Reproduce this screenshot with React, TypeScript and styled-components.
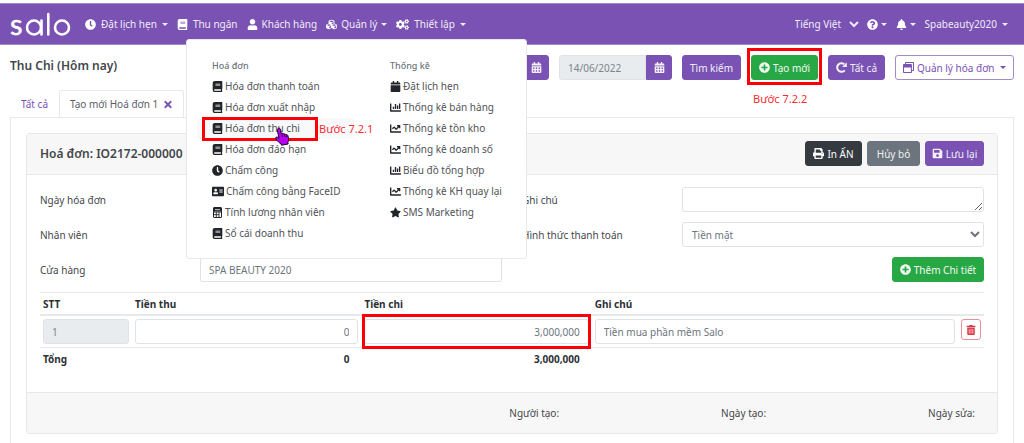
import React from "react";
import styled, { createGlobalStyle, css } from "styled-components";
import {
  FaAddressCard,
  FaBell,
  FaBook,
  FaCalendar,
  FaCalendarAlt,
  FaChartBar,
  FaChartLine,
  FaClock,
  FaCogs,
  FaCubes,
  FaPlusCircle,
  FaPrint,
  FaQuestionCircle,
  FaRegWindowRestore,
  FaSave,
  FaStar,
  FaTimes,
  FaTrashAlt,
  FaUser,
} from "react-icons/fa";

const purple = "#7952b3";
const green = "#28a745";
const line = "#e6e8ea";
const font = '"Noto Sans", "Open Sans", sans-serif';

const GlobalStyle = createGlobalStyle`
  *, *::before, *::after { box-sizing: border-box; }
  body { margin: 0; background: #fff; color: #43474b; font: 10px/16px ${font}; }
  button, input, select, textarea { font: inherit; }
  h1, h2, h3, ul { margin: 0; padding: 0; }
  ul { list-style: none; }
`;

const Page = styled.div`
  display: flex;
  flex-direction: column;
  min-height: 100vh;
`;

const Navbar = styled.header`
  position: relative;
  display: flex;
  align-items: center;
  justify-content: space-between;
  height: 42px;
  margin-top: 3px;
  padding: 0 16px 0 10px;
  background: ${purple};
  border-top: 1px solid #a38bc4;
  border-bottom: 1px solid #a38bc4;
  color: #fff;
`;

const NavGroup = styled.nav`
  display: flex;
  align-items: center;
  gap: 9px;
`;

const LogoLink = styled.a`
  display: flex;
  margin-right: 5px;
`;

const NavButton = styled.button<{ $gap?: number }>`
  display: flex;
  align-items: center;
  gap: ${(p) => p.$gap ?? 5}px;
  padding: 0;
  border: 0;
  background: none;
  color: #f1ecf7;
  white-space: nowrap;
  cursor: pointer;
  svg { width: 11px; height: 11px; color: #fff; }
`;

const WideNavButton = styled(NavButton)`
  svg { width: 13px; }
`;

const Caret = styled.span`
  border: 3px solid transparent;
  border-top-color: currentColor;
  border-bottom: 0;
`;

const LanguageSelect = styled.select`
  width: 71px;
  margin-right: -4px;
  padding: 0;
  border: 0;
  background: transparent;
  color: #f1ecf7;
`;

const Menu = styled.div`
  position: absolute;
  z-index: 2;
  top: 35px;
  left: 186px;
  display: grid;
  grid-template-columns: 157px 1fr;
  gap: 21px;
  width: 341px;
  height: 220px;
  padding: 16px 10px 0;
  background: #fff;
  border: 1px solid ${line};
  border-radius: 3px;
`;

const MenuTitle = styled.h3`
  padding: 0 15px;
  color: #6c757d;
  font-size: 9px;
  font-weight: 500;
  line-height: 20px;
`;

const MenuItem = styled.li<{ $active?: boolean }>`
  position: relative;
  background: ${(p) => (p.$active ? "#f8f9fa" : "none")};
`;

const MenuLink = styled.a<{ $wide?: boolean }>`
  display: flex;
  align-items: center;
  gap: 2px;
  padding: 0 15px;
  color: #4f5357;
  line-height: 21px;
  text-decoration: none;
  white-space: nowrap;
  svg { flex: none; width: ${(p) => (p.$wide ? 12 : 11)}px; height: 11px; color: #212529; }
`;

const Highlight = styled.span<{ $inset: string }>`
  position: absolute;
  z-index: 3;
  inset: ${(p) => p.$inset};
  border: 3px solid #fb0007;
  pointer-events: none;
`;

const Note = styled.span<{ $top: number; $left: number }>`
  position: absolute;
  z-index: 3;
  top: ${(p) => p.$top}px;
  left: ${(p) => p.$left}px;
  color: #fb2b30;
  font-size: 11px;
  line-height: 16px;
  white-space: nowrap;
`;

const Pointer = styled.svg`
  position: absolute;
  z-index: 4;
  top: 9px;
  left: 77px;
`;

const Toolbar = styled.div`
  display: flex;
  align-items: center;
  justify-content: space-between;
  padding: 10px;
`;

const PageTitle = styled.h1`
  padding-bottom: 3px;
  font-size: 12px;
  font-weight: 600;
  line-height: 20px;
`;

const Actions = styled.div`
  display: flex;
  gap: 10px;
`;

type Tone = "purple" | "green" | "dark" | "grey" | "outline";
const tones: Record<Tone, ReturnType<typeof css>> = {
  purple: css`background: ${purple}; border-color: ${purple}; color: #f4f0f9;`,
  green: css`background: ${green}; border-color: ${green}; color: #f1faf3;`,
  dark: css`background: #343a40; border-color: #343a40; color: #fff;`,
  grey: css`background: #6c757d; border-color: #6c757d; color: #f1f2f3;`,
  outline: css`background: #fff; border-color: #a38bc4; color: ${purple};`,
};

const Button = styled.button<{ $tone: Tone; $width: number }>`
  display: inline-flex;
  align-items: center;
  justify-content: center;
  gap: 3px;
  min-width: ${(p) => p.$width}px;
  height: 25px;
  padding: 0 4px;
  border: 1px solid;
  border-radius: 3px;
  white-space: nowrap;
  cursor: pointer;
  ${(p) => tones[p.$tone]}
  svg { flex: none; width: 11px; height: 11px; }
`;

const Anchor = styled.div`
  position: relative;
  display: flex;
`;

const DateGroup = styled.div`
  display: flex;
  button { border-radius: 0 3px 3px 0; }
`;

const control = css`
  width: 100%;
  height: 25px;
  padding: 0 8px;
  background: #fff;
  border: 1px solid #dfe3e7;
  border-radius: 3px;
  color: #6c757d;
`;

const Input = styled.input<{ $right?: boolean }>`
  ${control}
  display: block;
  text-align: ${(p) => (p.$right ? "right" : "left")};
  &:disabled { background: #e9ecef; color: #7c848b; }
`;

const DateInput = styled(Input)`
  width: 87px;
  border-radius: 3px 0 0 3px;
`;

const TextArea = styled.textarea`
  ${control}
  display: block;
  resize: vertical;
`;

const Select = styled.select`
  ${control}
  padding: 0 5px;
`;

const Tabs = styled.div`
  display: flex;
  padding: 0 10px;
`;

const Tab = styled.button<{ $active?: boolean }>`
  display: flex;
  align-items: center;
  gap: 5px;
  height: 28px;
  margin-bottom: -1px;
  padding: 0 10px;
  background: ${(p) => (p.$active ? "#fff" : "transparent")};
  border: 1px solid ${(p) => (p.$active ? line : "transparent")};
  border-bottom-color: ${(p) => (p.$active ? "#fff" : "transparent")};
  border-radius: 3px 3px 0 0;
  color: ${(p) => (p.$active ? "#5b6167" : purple)};
  cursor: pointer;
  svg { width: 10px; height: 11px; color: ${purple}; }
`;

const Pane = styled.main`
  flex: 1;
  margin: 0 10px;
  padding: 15px 15px 0;
  border: 1px solid ${line};
  border-bottom: 0;
`;

const Card = styled.section`
  border: 1px solid ${line};
  border-radius: 3px;
`;

const CardHeader = styled.div`
  display: flex;
  align-items: center;
  justify-content: space-between;
  padding: 7px 13px 8px;
  background: #f7f7f7;
  border-bottom: 1px solid ${line};
`;

const CardTitle = styled.h2`
  font-size: 12px;
  font-weight: 600;
  line-height: 20px;
`;

const CardActions = styled.div`
  display: flex;
  gap: 5px;
`;

const CardBody = styled.div`
  padding: 12px 13px 22px;
`;

const FormGrid = styled.div`
  display: grid;
  grid-template-columns: 1fr 1fr;
  gap: 10px 20px;
`;

const Field = styled.div`
  display: grid;
  grid-template-columns: 160px 1fr;
  align-items: center;
`;

const FieldAction = styled.div`
  display: flex;
  justify-content: flex-end;
`;

const Table = styled.table`
  width: 100%;
  margin-top: 10px;
  border-collapse: separate;
  border-spacing: 0;
  table-layout: fixed;
  th, td { padding: 3px; text-align: left; vertical-align: top; }
  th { color: #2c3034; font-weight: 700; line-height: 16px; }
  thead th { padding-bottom: 2px; border-top: 1px solid ${line}; border-bottom: 2px solid ${line}; }
  tfoot th { border-top: 1px solid ${line}; }
  tbody td { position: relative; }
`;

const Total = styled.th`
  && { padding-right: 12px; text-align: right; }
`;

const DeleteButton = styled.button`
  display: flex;
  align-items: center;
  justify-content: center;
  width: 20px;
  height: 21px;
  padding: 0;
  background: #fff;
  border: 1px solid #ea8e97;
  border-radius: 3px;
  color: #dc3545;
  cursor: pointer;
  svg { width: 10px; height: 10px; }
`;

const CardFooter = styled.div`
  display: flex;
  justify-content: flex-end;
  gap: 162px;
  padding: 12px 22px;
  background: #f7f7f7;
  border-top: 1px solid ${line};
`;

function Calculator() {
  return (
    <svg viewBox="0 0 9 11" fill="none" stroke="currentColor" aria-hidden="true">
      <rect x=".5" y=".5" width="8" height="10" rx=".5" />
      <rect x="1" y="1" width="7" height="3.500" fill="currentColor" stroke="none" />
      <path d="M2 2.700h5" stroke="#fff" strokeWidth=".8" />
      <path d="M.5 5h8M.5 7.700h5.500M3.300 5v5.500M6 5v5.500" strokeWidth=".9" />
    </svg>
  );
}

function Reload() {
  return (
    <svg viewBox="0 0 11 11" fill="none" aria-hidden="true">
      <path d="M8.800 8.300A4.300 4.300 0 1 1 8.300 2.300" stroke="currentColor" strokeWidth="2" />
      <path d="M10.800.3v4.700H6.100z" fill="currentColor" />
    </svg>
  );
}

const documents = [
  { icon: <FaBook />, label: "Hóa đơn thanh toán" },
  { icon: <FaBook />, label: "Hóa đơn xuất nhập" },
  { icon: <FaBook />, label: "Hóa đơn thu chi", active: true },
  { icon: <FaBook />, label: "Hóa đơn đáo hạn" },
  { icon: <FaClock />, label: "Chấm công" },
  { icon: <FaAddressCard />, label: "Chấm công bằng FaceID", wide: true },
  { icon: <Calculator />, label: "Tính lương nhân viên" },
  { icon: <FaBook />, label: "Sổ cái doanh thu" },
];

const reports = [
  { icon: <FaCalendar />, label: "Đặt lịch hẹn" },
  { icon: <FaChartBar />, label: "Thống kê bán hàng" },
  { icon: <FaChartLine />, label: "Thống kê tồn kho" },
  { icon: <FaChartLine />, label: "Thống kê doanh số" },
  { icon: <FaChartBar />, label: "Biểu đồ tổng hợp" },
  { icon: <FaChartLine />, label: "Thống kê KH quay lại" },
  { icon: <FaStar />, label: "SMS Marketing" },
];

function Logo() {
  return (
    <svg width="61" height="40" viewBox="0 -6 61 40" fill="none" stroke="#fff" strokeWidth="2.6" strokeLinecap="round" aria-hidden="true">
      <text x="0" y="25" fill="#fff" strokeWidth=".5" fontFamily="Lato, sans-serif" fontSize="29">s</text>
      <circle cx="24" cy="17.5" r="7" />
      <line x1="31.5" y1="10.5" x2="31.5" y2="24.500" />
      <line x1="38.3" y1="4" x2="38.3" y2="24.500" />
      <circle cx="52" cy="17.5" r="7" />
    </svg>
  );
}

function HandPointer() {
  return (
    <Pointer width="17" height="19" viewBox="0 0 17 19" aria-hidden="true">
      <path
        d="M4 1.5c1-.7 2.3-.2 2.5 1l.7 4 .9-.2c.8-.2 1.500.1 1.800.7.8-.3 1.600 0 2 .6.9-.2 1.700.2 2 1.100l.7 3c.3 1.600-.2 2.700-.7 3.600l.2 1.700-6.600 1.200-.6-1.500c-1.700-.8-3.300-2.500-5-4.700-.9-1.200.6-2.500 1.800-1.700l1.300 1L3.300 3c-.1-.6.200-1.200.7-1.500z"
        fill="#b400ee"
        stroke="#1c0426"
        strokeWidth="1"
      />
      <path d="M8 7.500l.4 2.500M10.500 7.500l.4 2.300M12.800 8.500l.2 1.500" stroke="#1c0426" strokeWidth="1" />
    </Pointer>
  );
}

export default function App() {
  return (
    <Page>
      <GlobalStyle />
      <Navbar>
        <NavGroup aria-label="Chính">
          <LogoLink href="#" aria-label="salo"><Logo /></LogoLink>
          <NavButton><FaClock />Đặt lịch hẹn<Caret /></NavButton>
          <NavButton><FaBook />Thu ngân</NavButton>
          <NavButton $gap={4}><FaUser />Khách hàng</NavButton>
          <NavButton $gap={4}><FaCubes />Quản lý<Caret /></NavButton>
          <WideNavButton><FaCogs />Thiết lập<Caret /></WideNavButton>
        </NavGroup>
        <NavGroup aria-label="Tài khoản">
          <LanguageSelect aria-label="Ngôn ngữ" defaultValue="vi">
            <option value="vi">Tiếng Việt</option>
          </LanguageSelect>
          <NavButton $gap={3} aria-label="Trợ giúp"><FaQuestionCircle /><Caret /></NavButton>
          <NavButton $gap={3} aria-label="Thông báo"><FaBell /><Caret /></NavButton>
          <NavButton>Spabeauty2020<Caret /></NavButton>
        </NavGroup>
        <Menu>
          <div>
            <MenuTitle>Hoá đơn</MenuTitle>
            <ul>
              {documents.map((item) => (
                <MenuItem key={item.label} $active={item.active}>
                  <MenuLink href="#" $wide={item.wide}>{item.icon}{item.label}</MenuLink>
                  {item.active && (
                    <>
                      <Highlight $inset="-1px 36px -2px 5px" />
                      <Note $top={3} $left={122}>Bước 7.2.1</Note>
                      <HandPointer />
                    </>
                  )}
                </MenuItem>
              ))}
            </ul>
          </div>
          <div>
            <MenuTitle>Thống kê</MenuTitle>
            <ul>
              {reports.map((item) => (
                <MenuItem key={item.label}>
                  <MenuLink href="#">{item.icon}{item.label}</MenuLink>
                </MenuItem>
              ))}
            </ul>
          </div>
        </Menu>
      </Navbar>

      <Toolbar>
        <PageTitle>Thu Chi (Hôm nay)</PageTitle>
        <Actions>
          <DateGroup>
            <DateInput aria-label="Từ ngày" defaultValue="14/06/2022" disabled />
            <Button $tone="purple" $width={26} aria-label="Chọn từ ngày"><FaCalendarAlt /></Button>
          </DateGroup>
          <DateGroup>
            <DateInput aria-label="Đến ngày" defaultValue="14/06/2022" disabled />
            <Button $tone="purple" $width={26} aria-label="Chọn đến ngày"><FaCalendarAlt /></Button>
          </DateGroup>
          <Button $tone="purple" $width={59}>Tìm kiếm</Button>
          <Anchor>
            <Button $tone="green" $width={67}><FaPlusCircle />Tạo mới</Button>
            <Highlight $inset="-7px -4px -5px -4px" />
            <Note $top={36} $left={2}>Bước 7.2.2</Note>
          </Anchor>
          <Button $tone="purple" $width={57}><Reload />Tất cả</Button>
          <Button $tone="outline" $width={119}><FaRegWindowRestore />Quản lý hóa đơn&nbsp;<Caret /></Button>
        </Actions>
      </Toolbar>

      <Tabs>
        <Tab>Tất cả</Tab>
        <Tab $active>Tạo mới Hoá đơn 1<FaTimes /></Tab>
      </Tabs>

      <Pane>
        <Card>
          <CardHeader>
            <CardTitle>Hoá đơn: IO2172-000000</CardTitle>
            <CardActions>
              <Button $tone="dark" $width={57}><FaPrint />In ẤN</Button>
              <Button $tone="grey" $width={53}>Hủy bỏ</Button>
              <Button $tone="purple" $width={59}><FaSave />Lưu lại</Button>
            </CardActions>
          </CardHeader>
          <CardBody>
            <FormGrid>
              <Field>
                <label htmlFor="date">Ngày hóa đơn</label>
                <Input id="date" defaultValue="14/06/2022" />
              </Field>
              <Field>
                <label htmlFor="note">Ghi chú</label>
                <TextArea id="note" />
              </Field>
              <Field>
                <label htmlFor="staff">Nhân viên</label>
                <Input id="staff" />
              </Field>
              <Field>
                <label htmlFor="payment">Hình thức thanh toán</label>
                <Select id="payment" defaultValue="cash">
                  <option value="cash">Tiền mặt</option>
                </Select>
              </Field>
              <Field>
                <label htmlFor="store">Cửa hàng</label>
                <Input id="store" defaultValue="SPA BEAUTY 2020" />
              </Field>
              <FieldAction>
                <Button $tone="green" $width={92}><FaPlusCircle />Thêm Chi tiết</Button>
              </FieldAction>
            </FormGrid>
            <Table>
              <colgroup>
                <col style={{ width: 92 }} />
                <col style={{ width: "24.3%" }} />
                <col style={{ width: "24.4%" }} />
                <col />
                <col style={{ width: 26 }} />
              </colgroup>
              <thead>
                <tr>
                  <th>STT</th>
                  <th>Tiền thu</th>
                  <th>Tiền chi</th>
                  <th>Ghi chú</th>
                  <th />
                </tr>
              </thead>
              <tbody>
                <tr>
                  <td><Input aria-label="STT" defaultValue="1" disabled /></td>
                  <td><Input aria-label="Tiền thu" defaultValue="0" $right /></td>
                  <td>
                    <Input aria-label="Tiền chi" defaultValue="3,000,000" $right />
                    <Highlight $inset="-2px 1px -2px 1px" />
                  </td>
                  <td><Input aria-label="Ghi chú" defaultValue="Tiền mua phần mềm Salo" /></td>
                  <td><DeleteButton aria-label="Xóa"><FaTrashAlt /></DeleteButton></td>
                </tr>
              </tbody>
              <tfoot>
                <tr>
                  <th>Tổng</th>
                  <Total>0</Total>
                  <Total>3,000,000</Total>
                  <th />
                  <th />
                </tr>
              </tfoot>
            </Table>
          </CardBody>
          <CardFooter>
            <span>Người tạo:</span>
            <span>Ngày tạo:</span>
            <span>Ngày sửa:</span>
          </CardFooter>
        </Card>
      </Pane>
    </Page>
  );
}
